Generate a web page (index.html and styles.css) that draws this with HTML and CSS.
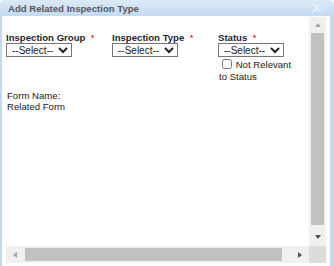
FILE: index.html
```html
<!DOCTYPE html>
<html lang="en">

<head>
    <meta charset="UTF-8">
    <meta name="viewport" content="width=device-width, initial-scale=1.0">
    <title>Add Related Inspection Type</title>
    <link rel="stylesheet" href="styles.css">
</head>

<body>
    <div class="dialog">
        <div class="dialog-title">
            <span class="title-text">Add Related Inspection Type</span>
            <svg class="close-btn" width="10" height="10" viewBox="0 0 10 10">
                <path d="M1 1 L9 9 M9 1 L1 9" stroke="#eef3f9" stroke-width="1.6" fill="none" />
            </svg>
        </div>

        <div class="dialog-body">
            <div class="scroll-box">
                <div class="scroll-view">
                    <div class="field-row">
                        <div class="field">
                            <label class="field-label">Inspection Group <span class="req">*</span></label>
                            <select class="field-select">
                                <option>--Select--</option>
                            </select>
                        </div>
                        <div class="field">
                            <label class="field-label">Inspection Type <span class="req">*</span></label>
                            <select class="field-select">
                                <option>--Select--</option>
                            </select>
                        </div>
                        <div class="field field-status">
                            <label class="field-label">Status <span class="req">*</span></label>
                            <select class="field-select">
                                <option>--Select--</option>
                            </select>
                            <label class="check-label"><input type="checkbox" class="check"> Not Relevant to Status</label>
                        </div>
                    </div>

                    <div class="form-name">Form Name:<br>Related Form</div>
                </div>

                <div class="vbar">
                    <div class="arrow arrow-up"></div>
                    <div class="vthumb"></div>
                    <div class="arrow arrow-down"></div>
                </div>
                <div class="hbar">
                    <div class="arrow arrow-left"></div>
                    <div class="hthumb"></div>
                    <div class="arrow arrow-right"></div>
                </div>
                <div class="corner"></div>
            </div>
        </div>
    </div>
</body>

</html>
```

FILE: styles.css
```css
body {
    margin: 0;
    font-family: "Liberation Sans", Arial, sans-serif;
    color: #222;
    overflow: hidden;
}

.dialog {
    height: 266px;
    display: flex;
    flex-direction: column;
    background-color: #c3d9f1;
    border-radius: 5px 5px 0 0;
}

.dialog-title {
    height: 16px;
    padding: 0 12px 0 8px;
    display: flex;
    align-items: center;
    justify-content: space-between;
    background: linear-gradient(#dde9f7, #c4daf2);
    border-radius: 5px 5px 0 0;
}

.title-text {
    font-size: 9.6px;
    font-weight: bold;
    color: #585858;
}

.dialog-body {
    flex: 1;
    margin: 0 4px 0 2px;
    padding: 1px 4px 3px 4px;
    background-color: white;
    min-height: 0;
}

.scroll-box {
    height: 100%;
    display: grid;
    grid-template-columns: 1fr 17px;
    grid-template-rows: 1fr 17px;
}

.scroll-view {
    padding: 15px 0 0 0;
    overflow: hidden;
}

.field-row {
    display: grid;
    grid-template-columns: 106px 106px 76px;
}

.field {
    display: flex;
    flex-direction: column;
    align-items: flex-start;
}

.field-label {
    font-size: 9.6px;
    font-weight: bold;
    line-height: 11px;
    color: #1f2533;
}

.req {
    color: #e00;
    font-size: 8px;
    margin-left: 3px;
    vertical-align: 1px;
}

.field-select {
    width: 66px;
    height: 14px;
    margin: 0;
    padding: 0 0 0 1px;
    font-family: "Liberation Sans", Arial, sans-serif;
    font-size: 10px;
    border: 1px solid #767676;
    border-radius: 0;
    background-color: white;
    color: #222;
}

.check-label {
    font-size: 9.6px;
    line-height: 12px;
    margin-top: 2px;
    padding-left: 1px;
}

.check {
    width: 10px;
    height: 10px;
    margin: 0 1px 0 3px;
    vertical-align: -1px;
}

.form-name {
    font-size: 9.6px;
    line-height: 11px;
    margin-top: 7px;
    padding-left: 1px;
}

.vbar {
    background-color: #f0f0f0;
    display: flex;
    flex-direction: column;
    align-items: center;
}

.hbar {
    background-color: #f0f0f0;
    display: flex;
    align-items: center;
}

.corner {
    background-color: #dcdcdc;
}

.vthumb {
    flex: 1;
    width: 13px;
    margin: 0 0 10px 0;
    background-color: #c1c1c1;
}

.hthumb {
    flex: 1;
    height: 13px;
    margin-right: 16px;
    background-color: #c1c1c1;
}

.arrow {
    width: 0;
    height: 0;
    border-style: solid;
    border-color: transparent;
}

.arrow-up {
    margin: 6px 0 6px;
    border-width: 0 3.5px 4px 3.5px;
    border-bottom-color: #a3a3a3;
}

.arrow-down {
    margin: 0 0 7px;
    border-width: 4px 3.5px 0 3.5px;
    border-top-color: #505050;
}

.arrow-left {
    margin: 0 8px 0 7px;
    border-width: 3.5px 4px 3.5px 0;
    border-right-color: #a3a3a3;
}

.arrow-right {
    margin-right: 7px;
    border-width: 3.5px 0 3.5px 4px;
    border-left-color: #505050;
}
```
